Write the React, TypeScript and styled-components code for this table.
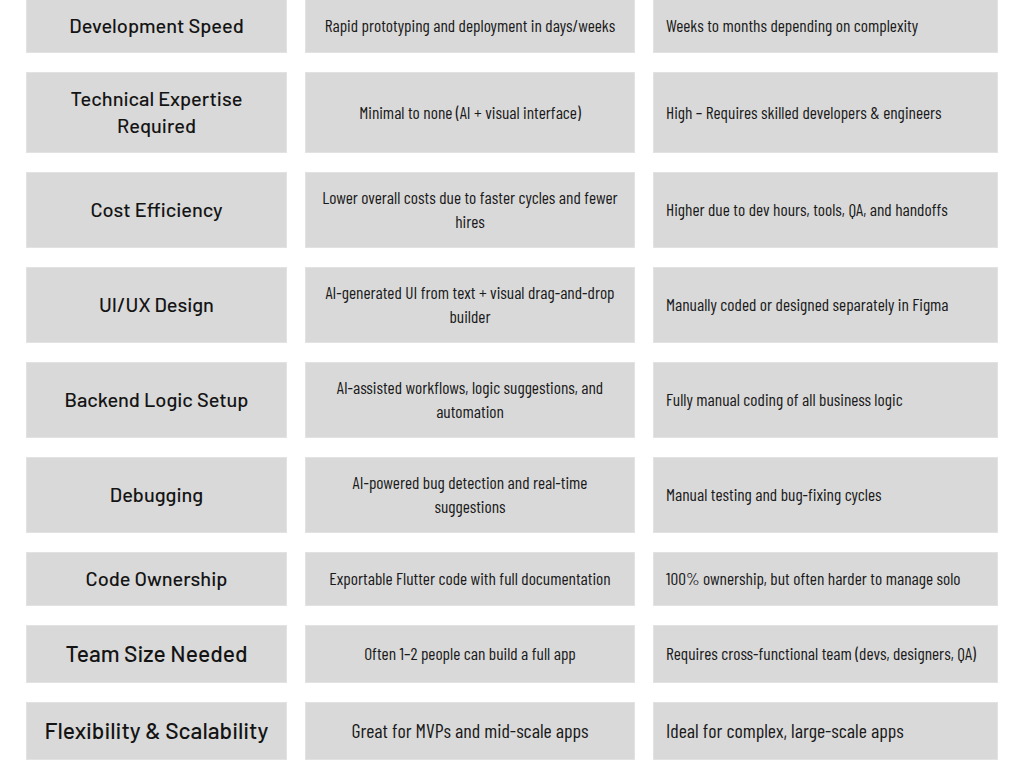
import React from "react";
import styled, { createGlobalStyle } from "styled-components";

const GlobalStyle = createGlobalStyle`
  html, body { margin: 0; padding: 0; background: #ffffff; }
  body { overflow: hidden; }
`;

const Table = styled.div`
  display: grid;
  grid-template-columns: 261px 330px 345px;
  grid-template-rows: 54px 81px 76px 76px 76px 76px 54px 58px 58px;
  column-gap: 18px;
  row-gap: 19px;
  padding-left: 26px;
  margin-top: -1px;
`;

const Cell = styled.div`
  background: #d9d9d9;
  box-shadow: inset 0 0 0 1px #e2e2e2;
  display: flex;
  align-items: center;
  color: #111;
  box-sizing: border-box;
  padding-bottom: 2px;
`;

const Feature = styled(Cell)<{ $size: number }>`
  justify-content: center;
  text-align: center;
  padding-left: 10px;
  padding-right: 10px;
  font-family: "Barlow", "Roboto", sans-serif;
  font-weight: 500;
  font-size: ${(p) => p.$size}px;
  line-height: 27px;
  color: #141414;
`;

const LowCode = styled(Cell)<{ $size: number }>`
  justify-content: center;
  text-align: center;
  padding-left: 16px;
  padding-right: 16px;
  font-family: "Barlow Condensed", "Roboto", sans-serif;
  font-size: ${(p) => p.$size}px;
  line-height: 24px;
  color: #1a1a1a;
`;

const Traditional = styled(Cell)<{ $size: number }>`
  justify-content: flex-start;
  text-align: left;
  padding-left: 13px;
  padding-right: 13px;
  font-family: "Barlow Condensed", "Roboto", sans-serif;
  font-size: ${(p) => p.$size}px;
  line-height: 24px;
  color: #1a1a1a;
`;

type Row = {
  feature: string;
  fSize: number;
  low: string;
  lSize: number;
  trad: string;
  tSize: number;
};

const rows: Row[] = [
  { feature: "Development Speed", fSize: 20, low: "Rapid prototyping and deployment in days/weeks", lSize: 17.4, trad: "Weeks to months depending on complexity", tSize: 17.4 },
  { feature: "Technical Expertise Required", fSize: 20, low: "Minimal to none (AI + visual interface)", lSize: 17.4, trad: "High – Requires skilled developers & engineers", tSize: 17.4 },
  { feature: "Cost Efficiency", fSize: 20, low: "Lower overall costs due to faster cycles and fewer hires", lSize: 17.4, trad: "Higher due to dev hours, tools, QA, and handoffs", tSize: 17.4 },
  { feature: "UI/UX Design", fSize: 20, low: "AI-generated UI from text + visual drag-and-drop builder", lSize: 17.4, trad: "Manually coded or designed separately in Figma", tSize: 17.4 },
  { feature: "Backend Logic Setup", fSize: 20, low: "AI-assisted workflows, logic suggestions, and automation", lSize: 17.4, trad: "Fully manual coding of all business logic", tSize: 17.4 },
  { feature: "Debugging", fSize: 20, low: "AI-powered bug detection and real-time suggestions", lSize: 17.4, trad: "Manual testing and bug-fixing cycles", tSize: 17.4 },
  { feature: "Code Ownership", fSize: 20, low: "Exportable Flutter code with full documentation", lSize: 17.4, trad: "100% ownership, but often harder to manage solo", tSize: 17.4 },
  { feature: "Team Size Needed", fSize: 22.8, low: "Often 1–2 people can build a full app", lSize: 17.4, trad: "Requires cross-functional team (devs, designers, QA)", tSize: 17.4 },
  { feature: "Flexibility & Scalability", fSize: 22.8, low: "Great for MVPs and mid-scale apps", lSize: 20, trad: "Ideal for complex, large-scale apps", tSize: 20 },
];

export default function App() {
  return (
    <>
      <GlobalStyle />
      <Table>
        {rows.map((r) => (
          <React.Fragment key={r.feature}>
            <Feature $size={r.fSize}>{r.feature}</Feature>
            <LowCode $size={r.lSize}>{r.low}</LowCode>
            <Traditional $size={r.tSize}>{r.trad}</Traditional>
          </React.Fragment>
        ))}
      </Table>
    </>
  );
}
